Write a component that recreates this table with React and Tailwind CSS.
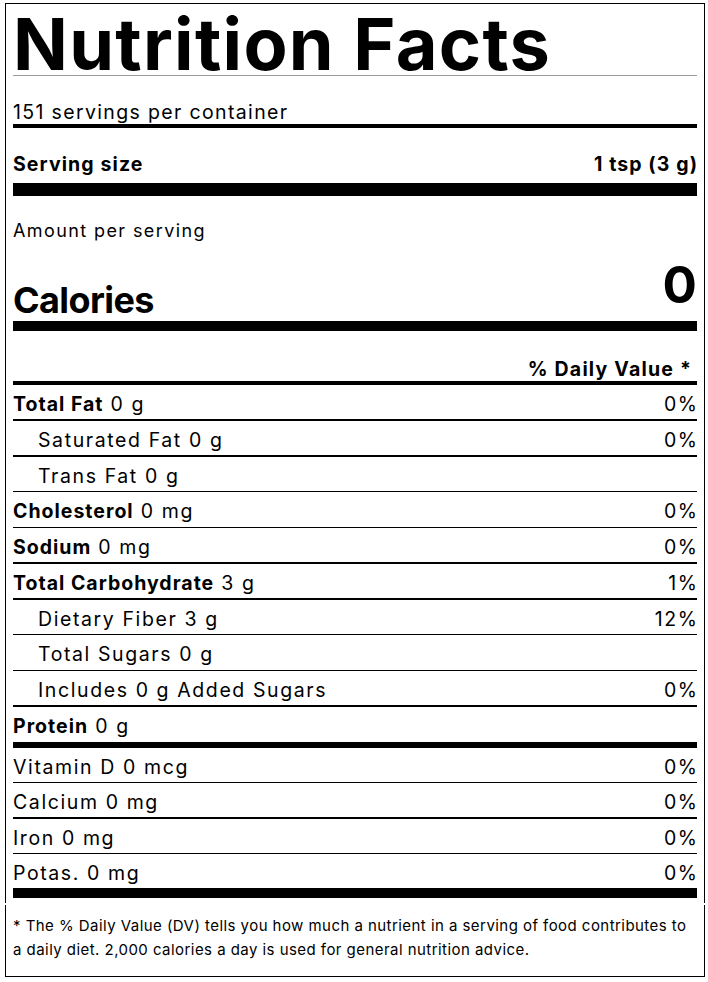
const rows = [
  { label: 'Total Fat', value: '0 g', dv: '0%', bold: true },
  { label: 'Saturated Fat', value: '0 g', dv: '0%', indent: true },
  { label: 'Trans Fat', value: '0 g', dv: '', indent: true },
  { label: 'Cholesterol', value: '0 mg', dv: '0%', bold: true },
  { label: 'Sodium', value: '0 mg', dv: '0%', bold: true },
  { label: 'Total Carbohydrate', value: '3 g', dv: '1%', bold: true },
  { label: 'Dietary Fiber', value: '3 g', dv: '12%', indent: true },
  { label: 'Total Sugars', value: '0 g', dv: '', indent: true },
  { label: 'Includes 0 g Added Sugars', value: '', dv: '0%', indent: true },
];

const minerals = [
  { label: 'Vitamin D 0 mcg', dv: '0%' },
  { label: 'Calcium 0 mg', dv: '0%' },
  { label: 'Iron 0 mg', dv: '0%' },
  { label: 'Potas. 0 mg', dv: '0%' },
];

const Row = ({ row }) => (
  <div className="flex h-[34.25px] items-center justify-between pt-[4px] text-[19.5px] leading-[24px] tracking-[1.6px]">
    <span className={row.indent ? 'pl-[25px]' : ''}>
      {row.bold ? <span className="font-bold tracking-[1px]">{row.label}</span> : row.label}
      {row.value && ' ' + row.value}
    </span>
    <span className="-mr-[1.6px]">{row.dv}</span>
  </div>
);

export default function App() {
  return (
    <div className="min-h-screen bg-white font-['Inter',sans-serif] text-black">
      <div className="ml-[5px] w-[700px] pt-[3px]">
        {/* label */}
        <div className="border-x border-t border-black px-[7px] pt-[9px]">
          <h1 className="text-[72px] font-bold leading-[62px] tracking-[1.3px]">Nutrition Facts</h1>
          <div className="h-px bg-[#9c9c9c]" />

          <div className="mt-[24px] text-[19.5px] leading-[24px] tracking-[1.35px]">151 servings per container</div>
          <div className="h-[4px] bg-black" />

          <div className="mt-[24px] flex justify-between text-[19.5px] font-bold leading-[24px] tracking-[1.1px]">
            <span>Serving size</span>
            <span className="-mr-[1.1px]">1 tsp (3 g)</span>
          </div>
          <div className="mt-[7px] h-[13px] bg-black" />

          <div className="mt-[23px] text-[18px] leading-[24px] tracking-[1.4px]">Amount per serving</div>
          <div className="mt-[16px] flex items-end justify-between font-bold">
            <span className="text-[36px] leading-[36px] tracking-[-0.6px]">Calories</span>
            <span className="mb-[8px] text-[51px] leading-[51px]">0</span>
          </div>
          <div className="mt-[3px] h-[10px] bg-black" />

          <div className="mt-[26px] pr-[5px] text-right text-[19.5px] font-bold leading-[24px] tracking-[1.2px]">% Daily Value *</div>
          <div className="h-[4px] bg-black" />

          {rows.map((row, i) => (
            <div key={row.label}>
              {i > 0 && <div className="h-[1.5px] bg-black" />}
              <Row row={row} />
            </div>
          ))}
          <div className="h-[1.5px] bg-black" />
          <div className="flex h-[35px] items-center pt-[4px] text-[19.5px] leading-[24px] tracking-[1.6px]">
            <span><span className="font-bold tracking-[1px]">Protein</span> 0 g</span>
          </div>
          <div className="h-[6px] bg-black" />

          {minerals.map((m, i) => (
            <div key={m.label}>
              {i > 0 && <div className="h-[1.5px] bg-black" />}
              <div className="flex h-[34px] items-center justify-between pt-[4px] text-[19.5px] leading-[24px] tracking-[1.6px]">
                <span>{m.label}</span>
                <span className="-mr-[1.6px]">{m.dv}</span>
              </div>
            </div>
          ))}
          <div className="h-[10px] bg-black" />
          <div className="h-[5px]" />
        </div>

        {/* footnote */}
        <div className="mt-[2px] border-x border-b border-black px-[7px] pb-[14px] pt-[9px] text-[15px] leading-[24px] tracking-[0.45px]">
          <p className="whitespace-nowrap">
            * The % Daily Value (DV) tells you how much a nutrient in a serving of food contributes to
            <br />
            a daily diet. 2,000 calories a day is used for general nutrition advice.
          </p>
        </div>
      </div>
    </div>
  );
}
